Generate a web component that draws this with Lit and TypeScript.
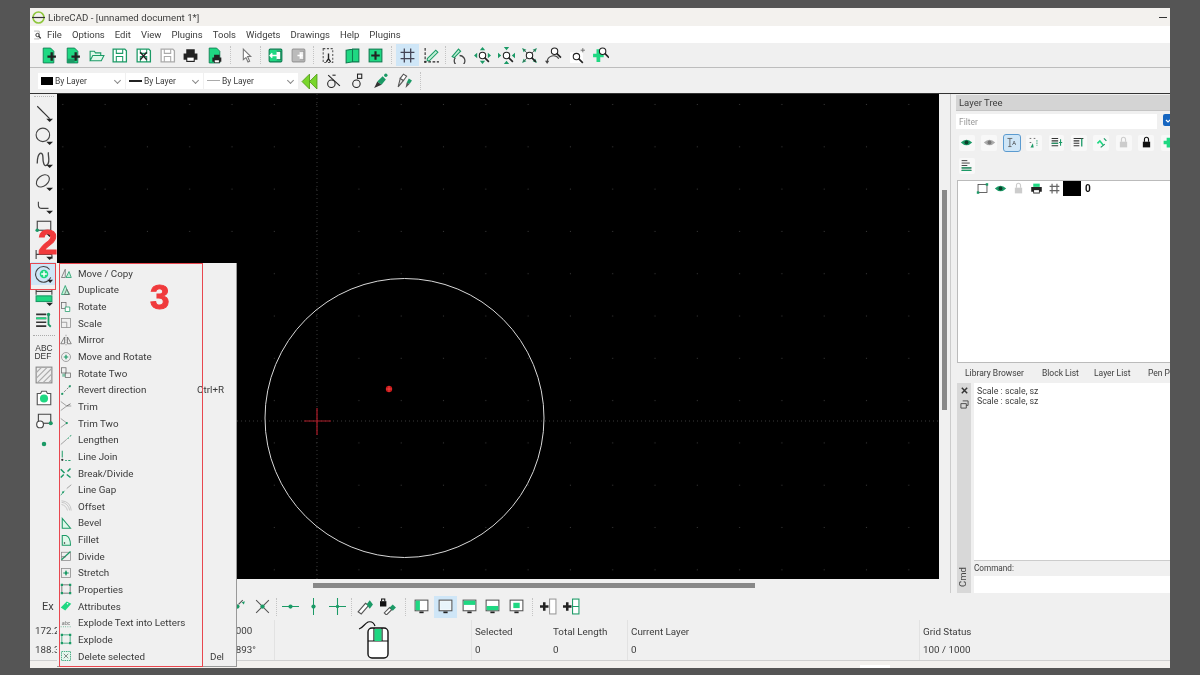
import { LitElement, html, css, svg } from 'lit';
import { customElement } from 'lit/decorators.js';

const G = '#1fd882';
const D = '#1b9a66';
const K = '#222';
const S = '#777';

const lens = (x: number, y: number) => svg`<circle cx=${x} cy=${y} r="3" fill="#fff" stroke=${K}/><path d="M${x + 2} ${y + 2}l4 4" stroke=${K} stroke-width="1.5"/>`;
const arrows = svg`<path d="M8 0l2.5 3h-5zM8 16l-2.5-3h5zM0 8l3-2.5v5zM16 8l-3-2.5v5z" fill=${D}/>`;
const floppy = (c: string) => svg`<path d="M2 2h11l1.5 1.5V14H2z" fill="#fff" stroke=${c} stroke-width="1.2"/><path d="M5 2v4h6V2M5 14V9h6v5" fill="none" stroke=${c}/>`;
const printer = (c: string) => svg`<path d="M4 2h8v4H4zM1.5 6h13v6H12v2H4v-2H1.5z" fill=${c}/><rect x="5" y="10" width="6" height="3" fill="#fff"/>`;
const page = (c: string) => svg`<path d="M3 1h7l3 3v11H3z" fill=${c} stroke="#0f7a50" stroke-width=".8"/>`;
const plus = svg`<path d="M7 9h8M11 5v8" stroke=${K} stroke-width="2.2"/>`;
const screen = (body: unknown) => svg`<rect x="2" y="2" width="12" height="10" fill="#fff" stroke="#555"/>${body}<path d="M6 13.5h4" stroke=${K} stroke-width="1.6"/>`;

const icons: Record<string, unknown> = {
  newdoc: svg`${page(G)}${plus}`,
  newtmpl: svg`${page(G)}<rect x="3" y="11" width="7" height="4" fill=${D}/>${plus}`,
  open: svg`<path d="M2 13V4h4l1 1.5h5V8M2 13l2.5-5H15l-2.5 5z" fill="#dff8ea" stroke=${D}/>`,
  save: floppy(D),
  saveas: svg`${floppy(D)}<path d="M5 5l6 7M11 5l-6 7" stroke=${K} stroke-width="1.3"/>`,
  savegrey: floppy('#aaa'),
  print: printer(K),
  printgreen: svg`<path d="M4 2h8v4H4z" fill=${G}/><path d="M1.500 6h13v6H12v2H4v-2H1.500z" fill=${K}/><rect x="5" y="10" width="6" height="3" fill="#fff"/>`,
  preview: svg`${page(G)}${svg`<g transform="translate(5 6) scale(.65)">${printer(K)}</g>`}`,
  pointer: svg`<path d="M5 2l7 7H9l2 4.5-1.6.7L7.500 10 5 12z" fill="#fff" stroke=${S}/>`,
  blockin: svg`<rect x="2" y="2" width="12" height="12" rx="1" fill=${G} stroke="#0f7a50"/><path d="M9 4h4v8H9" fill="#fff" stroke="#0f7a50"/><path d="M3 8h7M5 6L3 8l2 2" fill="none" stroke="#fff" stroke-width="1.4"/>`,
  blockgrey: svg`<rect x="2" y="2" width="12" height="12" rx="1" fill="#bbb" stroke="#999"/><path d="M9 4h4v8H9" fill="#eee" stroke="#999"/><path d="M7 8h5M10 6v4" stroke="#fff" stroke-width="1.4"/>`,
  cut: svg`<rect x="3" y="1.500" width="9" height="13" fill="none" stroke="#555" stroke-dasharray="2 1.500"/><path d="M8 6v5M6 14l2-3 2 3" stroke=${K} fill="none" stroke-width="1.300"/>`,
  book: svg`<path d="M2 3l6-1v12l-6 1zM8 2h6v12H8z" fill=${G} stroke="#0f7a50"/>`,
  bookplus: svg`<rect x="2" y="2" width="12" height="12" fill=${G} stroke="#0f7a50"/><path d="M4 8h8M8 4v8" stroke=${K} stroke-width="2"/>`,
  grid: svg`<path d="M5 1.500v13M11 1.500v13M1.500 5h13M1.500 11h13" stroke="#445" stroke-width="1.200"/>`,
  draft: svg`<path d="M2 1v14M1 14h14" stroke=${K} stroke-dasharray="2.500 1.500"/><path d="M4 11l8-8 2 2-8 8H4z" fill="#bff0d6" stroke=${D}/>`,
  redraw: svg`<path d="M2 9l6-7 2 2-6 6z" fill="#bff0d6" stroke=${D}/><path d="M5 10a5 5 0 1 0 4-2" fill="none" stroke="#444" stroke-width="1.200"/>`,
  zoomin: svg`${arrows}${lens(8, 8)}`,
  zoomout: svg`<path d="M8 3l2.500-3h-5zM8 13l-2.500 3h5zM3 8L0 5.500v5zM13 8l3-2.500v5z" fill=${D}/>${lens(8, 8)}`,
  zoomauto: svg`<path d="M1 1l4 1.500L2.500 5zM15 1l-4 1.500L13.500 5zM1 15l4-1.500L2.500 11zM15 15l-4-1.500 2.500-2.500z" fill=${D}/><path d="M2 2l12 12M14 2L2 14" stroke="#555" stroke-width=".8"/>${lens(8, 8)}`,
  zoomprev: svg`<path d="M2 14a6 6 0 0 1 11-3" fill="none" stroke="#444"/><path d="M0 13l4 0-2 3z" fill="#444"/>${lens(9, 4)}`,
  zoomwin: svg`<rect x="1" y="5" width="12" height="10" fill="#fff"/>${lens(7, 9)}<path d="M13 1v4M11 3h4" stroke="#666" stroke-width=".8"/>`,
  zoompan: svg`<path d="M6 2v12M1 8h10" stroke=${G} stroke-width="3.500"/>${lens(10, 4)}`,
  colorback: svg`<path d="M8 2L1 9l7 7zM15 2L8 9l7 7z" fill="#79d62c" stroke="#4f9c12" stroke-width=".8"/>`,
  modcirc: svg`<circle cx="6" cy="11" r="3.500" fill="none" stroke=${K}/><path d="M3 3l11 10" stroke=${K}/><path d="M7 3h3" stroke=${K}/>`,
  modsm: svg`<circle cx="7" cy="11" r="3.500" fill="none" stroke=${K}/><rect x="8" y="2" width="4" height="4" fill="none" stroke=${K}/>`,
  pencil: svg`<path d="M2 15l3-6 4 3z" fill="#333"/><path d="M5 9l5-5 3 3-4 5z" fill=${D}/><circle cx="13" cy="3" r="1.600" fill=${D}/>`,
  pencils: svg`<path d="M2 14l2-8 3 2z" fill="#ddd" stroke="#555"/><path d="M4 6l3-4 3 2-3 4z" fill="#fff" stroke="#555"/><path d="M9 15l1-5 3 1z" fill="#555"/><path d="M10 10l2-4 3 2-2 3z" fill=${D}/>`,
  line: svg`<path d="M2 2l11 11" stroke="#333"/><path d="M10 13h6l-3 3z" fill=${K}/>`,
  circle: svg`<circle cx="7" cy="7" r="6" fill="none" stroke="#444"/><path d="M10 13h6l-3 3z" fill=${K}/>`,
  spline: svg`<path d="M2 12C2 1 7 1 7 6s1 10 4 7 0-9 1-11" fill="none" stroke="#444" stroke-width="1.200"/><path d="M10 13h6l-3 3z" fill=${K}/>`,
  ellipse: svg`<ellipse cx="7" cy="7" rx="6.500" ry="4.500" transform="rotate(-40 7 7)" fill="none" stroke="#444"/><path d="M10 13h6l-3 3z" fill=${K}/>`,
  polyline: svg`<path d="M3 5v3q0 3 3 3h6" fill="none" stroke="#444"/><path d="M10 13h6l-3 3z" fill=${K}/>`,
  rect: svg`<rect x="2" y="2" width="12" height="8" fill="none" stroke="#444"/><circle cx="2" cy="10" r="1.600" fill=${D}/><path d="M10 13h6l-3 3z" fill=${K}/>`,
  dim: svg`<path d="M1 7v8M15 7v8M1 11h14" stroke="#444"/><path d="M10 13h6l-3 3z" fill=${K}/>`,
  modify: svg`<path d="M13 4a7 7 0 1 0 1 7" fill="none" stroke="#444"/><circle cx="8" cy="8" r="3.800" fill=${G}/><path d="M5.500 8h5M8 5.500v5" stroke="#fff" stroke-width="1.300"/><path d="M11 13h5l-2.500 3z" fill=${K}/>`,
  measure: svg`<path d="M1 1v5M15 1v5M1 3h14" stroke="#444"/><rect x="1" y="7" width="14" height="5" fill=${G} stroke=${D}/><path d="M10 13h6l-3 3z" fill=${K}/>`,
  select: svg`<path d="M1 3h9M1 6.500h9M1 10h9M1 13.500h9" stroke="#333" stroke-width="1.500"/><path d="M1 6.500h9" stroke=${G} stroke-width="1.500"/><path d="M12 3v9l2 2" fill="none" stroke=${D} stroke-width="1.600"/><circle cx="12" cy="3" r="1.500" fill=${D}/>`,
  text: svg`<text x="8" y="7.500" text-anchor="middle" font-size="7.500" font-family="Liberation Sans" fill="#333">ABC</text><text x="7" y="14.500" text-anchor="middle" font-size="7.500" font-family="Liberation Sans" fill="#333">DEF</text>`,
  hatch: svg`<rect x="1" y="1" width="14" height="14" fill="#eee" stroke="#888"/><path d="M1 6l5-5M1 11L11 1M2 15L15 2M7 15l8-8M12 15l3-3" stroke="#aaa"/>`,
  camera: svg`<path d="M2 4h3l1-2h4l1 2h3v10H2z" fill="#fff" stroke="#555"/><circle cx="8" cy="8.500" r="3.600" fill=${G}/>`,
  insert: svg`<path d="M3 9V2h11v7" fill="none" stroke="#444"/><circle cx="4.500" cy="11" r="3" fill="#fff" stroke="#444"/><path d="M7 10h6" stroke="#444"/><circle cx="14" cy="10" r="1.800" fill=${D}/>`,
  dot: svg`<circle cx="8" cy="8" r="2" fill=${D}/>`,
  eye: svg`<path d="M1 8q7-7 14 0-7 7-14 0z" fill=${D}/><circle cx="8" cy="8" r="2.400" fill="#0b3f2a"/>`,
  eyegrey: svg`<path d="M1 8q7-7 14 0-7 7-14 0z" fill="#aaa"/><circle cx="8" cy="8" r="2.400" fill="#777"/>`,
  ta: svg`<path d="M3 3h6M6 3v10M4 13h4" stroke="#555" fill="none"/><text x="9" y="11" font-size="7" font-family="Liberation Sans" fill="#333">A</text>`,
  layers: svg`<path d="M2 3h2M7 3h2M2 8h2" stroke="#555"/><path d="M3 14l3-5 1 5z" fill=${D}/><path d="M11 5v7" stroke=${D} stroke-dasharray="2 1"/>`,
  rowsa: svg`<path d="M2 3h8M2 6h8M2 9h8M2 12h8" stroke="#333" stroke-width="1.300"/><path d="M2 9h8" stroke=${D} stroke-width="1.300"/><path d="M13 4v8M11 8h4" stroke=${D} stroke-width="1.300"/>`,
  rowsb: svg`<path d="M2 3h12M2 6h7M2 9h7M2 12h7" stroke="#333" stroke-width="1.300"/><path d="M12 3v10" stroke=${D} stroke-width="1.600"/>`,
  diag: svg`<path d="M3 9l3-3 4 5" fill="none" stroke=${G} stroke-width="2"/><path d="M11 3l3 3M7 14l5-4" stroke=${D} stroke-width="1.500"/>`,
  lockgrey: svg`<rect x="3.500" y="7" width="9" height="7" fill="#ccc"/><path d="M5.500 7V4a2.500 2.500 0 0 1 5 0v3" fill="none" stroke="#ccc" stroke-width="1.400"/>`,
  lock: svg`<rect x="3.500" y="7" width="9" height="7" fill="#111"/><path d="M5.500 7V4a2.500 2.500 0 0 1 5 0v3" fill="none" stroke="#111" stroke-width="1.400"/>`,
  greenplus: svg`<path d="M8 2v12M2 8h12" stroke=${G} stroke-width="4.500"/>`,
  stack: svg`<path d="M2 2h7M2 5h10M2 8h7M2 11h12M2 14h12" stroke="#444" stroke-width="1.200"/><path d="M2 11h12M2 14h12" stroke=${D} stroke-width="1.600"/>`,
  square: svg`<rect x="2.500" y="3" width="11" height="10" fill="none" stroke="#444"/><rect x="1" y="11.500" width="3" height="3" fill=${D}/><rect x="12" y="1.500" width="3" height="3" fill=${D}/>`,
  hash: svg`<path d="M5 2v12M11 2v12M2 5.500h12M2 10.500h12" stroke="#666" stroke-width="1.500"/>`,
  snapa: svg`<path d="M3 3l4 4M12 2L8 6M3 13l4-5" stroke="#555"/><circle cx="7" cy="8" r="2" fill=${D}/><path d="M14 3l-3 1 2 2z" fill=${D}/>`,
  snapx: svg`<path d="M2 2l12 12M14 2L2 14" stroke="#555"/><circle cx="8" cy="8" r="2" fill=${D}/>`,
  reli: svg`<path d="M0 8h16" stroke=${D}/><circle cx="8" cy="8" r="2" fill=${D}/>`,
  relv: svg`<path d="M8 0v16" stroke=${D}/><circle cx="8" cy="8" r="2" fill=${D}/>`,
  relx: svg`<path d="M8 0v16M0 8h16" stroke=${D}/><circle cx="8" cy="8" r="1.600" fill=${D}/>`,
  rel0: svg`<path d="M1 13l3 2 7-8-3-2z" fill="#fff" stroke="#555"/><path d="M12 2l3 4-3 4-3-4z" fill=${D}/>`,
  rellock: svg`<rect x="0" y="3" width="6" height="5" fill="#111"/><path d="M1.500 3V1h3v2" fill="none" stroke="#111"/><path d="M4 14l2 2 5-5-2-2z" fill="#fff" stroke="#555"/><path d="M12 6l3 3-3 3-3-3z" fill=${D}/>`,
  scrleft: screen(svg`<rect x="2.500" y="2.500" width="4" height="9" fill=${G}/>`),
  scrfull: screen(svg`<rect x="3" y="3" width="10" height="8" fill="#e8f4fb"/>`),
  scrtop: screen(svg`<rect x="2.500" y="2.500" width="11" height="4" fill=${G}/>`),
  scrbot: screen(svg`<rect x="2.500" y="7.500" width="11" height="4" fill=${G}/>`),
  scrmid: screen(svg`<rect x="5" y="4.500" width="6" height="5" fill=${G}/>`),
  addone: svg`<path d="M0 8h8M4 4v8" stroke=${K} stroke-width="2.400"/><rect x="9" y="1" width="6" height="14" fill="#fff" stroke="#999"/>`,
  addtwo: svg`<path d="M0 8h8M4 4v8" stroke=${K} stroke-width="2.400"/><rect x="9" y="1" width="6" height="14" fill="#fff" stroke=${D}/><path d="M9 8h6" stroke=${D}/>`,
  mMove: svg`<path d="M2 14l5-11v11z" fill="none" stroke="#666"/><path d="M8 14l4-8 3 8z" fill="#bff0d6" stroke=${D}/>`,
  mDup: svg`<path d="M2 14l5-12 5 12z" fill="#bff0d6" stroke=${D}/><path d="M6 14l3-7 4 7z" fill="none" stroke="#666"/>`,
  mRot: svg`<rect x="2" y="2" width="6" height="8" fill="none" stroke="#666"/><path d="M7 8h6v6H7z" fill="#fff" stroke=${D}/>`,
  mScale: svg`<rect x="2" y="2" width="12" height="12" fill="none" stroke="#888"/><path d="M2 7h7v7" fill="none" stroke="#888"/>`,
  mMirror: svg`<path d="M8 1v14" stroke="#888" stroke-dasharray="2 1"/><path d="M6 13H1l5-9zM10 13h5l-5-9z" fill="none" stroke="#666"/>`,
  mMoveRot: svg`<circle cx="8" cy="8" r="6" fill="none" stroke="#888"/><path d="M5 8h6M8 5v6" stroke=${D} stroke-width="1.600"/>`,
  mRot2: svg`<rect x="2" y="1" width="6" height="7" fill="none" stroke="#666"/><rect x="7" y="8" width="7" height="6" fill="none" stroke="#666"/><rect x="3" y="9" width="4" height="4" fill=${D} opacity=".5"/>`,
  mRevert: svg`<path d="M2 14L14 2" stroke="#555" stroke-dasharray="3 2"/><circle cx="3" cy="13" r="1.500" fill=${D}/><circle cx="13" cy="3" r="1.500" fill=${D}/>`,
  mTrim: svg`<path d="M1 2l8 6-8 6M9 8h6" fill="none" stroke="#888"/><path d="M9 8l5-3" stroke="#555"/>`,
  mTrim2: svg`<path d="M1 2l8 6-8 6" fill="none" stroke="#888"/><circle cx="9" cy="8" r="1.500" fill=${D}/>`,
  mLen: svg`<path d="M1 14l8-7" stroke="#888"/><path d="M10 6l2-1M13 3l2-1" stroke=${D} stroke-width="1.300"/>`,
  mJoin: svg`<path d="M3 1v9M7 14h2M11 14h3" stroke=${D} stroke-width="1.300"/><circle cx="3" cy="13" r="1.500" fill="#333"/>`,
  mBreak: svg`<path d="M1 3l5 5M9 10l5 4M14 2l-4 4M5 10l-4 4" stroke=${D} stroke-width="2"/>`,
  mGap: svg`<path d="M1 15l5-6" stroke=${D}/><path d="M9 6l6-5" stroke="#888"/><circle cx="4" cy="11" r="1.200" fill=${D}/>`,
  mOffset: svg`<path d="M2 3q9 1 11 11M2 6q6 1 8 8M2 1q12 1 13 13" fill="none" stroke="#bbb"/>`,
  mBevel: svg`<path d="M3 15V2l11 13z" fill="#dff8ea" stroke=${D} stroke-width="1.400"/>`,
  mFillet: svg`<path d="M3 15V2h5q6 2 6 13z" fill="#dff8ea" stroke=${D} stroke-width="1.400"/><circle cx="6" cy="12" r="1" fill=${K}/>`,
  mDivide: svg`<rect x="2" y="3" width="12" height="11" fill="none" stroke="#888"/><path d="M2 13L14 2" stroke=${D} stroke-width="1.600"/><path d="M2 9h6" stroke="#666"/>`,
  mStretch: svg`<rect x="2" y="2" width="12" height="12" fill="#eee" stroke="#888"/><path d="M8 4l2 4-2 4-2-4z" fill=${D}/><path d="M4 8h8" stroke=${D}/>`,
  mProps: svg`<rect x="2.500" y="2.500" width="11" height="11" fill="none" stroke="#555"/><path d="M1 1h3v3H1zM12 1h3v3h-3zM1 12h3v3H1zM12 12h3v3h-3z" fill=${D}/>`,
  mAttr: svg`<path d="M1 10l8-8 6 3-8 9z" fill=${G}/><circle cx="10" cy="5" r="1" fill="#fff"/>`,
  mExText: svg`<text x="8" y="11" text-anchor="middle" font-size="7" font-style="italic" font-family="Liberation Sans" fill="#666">abc</text><path d="M1 13h14" stroke=${D} stroke-dasharray="1 2"/>`,
  mExplode: svg`<rect x="2.500" y="2.500" width="11" height="11" fill="none" stroke=${D}/><path d="M1 1h3v3H1zM12 1h3v3h-3zM1 12h3v3H1zM12 12h3v3h-3z" fill=${D}/>`,
  mDelete: svg`<rect x="2" y="2" width="12" height="12" fill="#e6f7ee" stroke=${D} stroke-dasharray="2 1"/><path d="M5 5l6 6M11 5l-6 6" stroke="#666"/>`,
};

const ic = (name: string) => html`<svg class="ic" viewBox="0 0 16 16">${icons[name]}</svg>`;

// numbers in a toolbar list are separator widths, strings are buttons
const topBar: (string | number)[] = ['newdoc', 'newtmpl', 'open', 'save', 'saveas', 'savegrey', 'print', 'preview', 8, 'pointer', 5, 'blockin', 'blockgrey', 6, 'cut', 'book', 'bookplus', 8, '*grid', 'draft', 4, 'redraw', 'zoomin', 'zoomout', 'zoomauto', 'zoomprev', 'zoomwin', 'zoompan'];
const penBar = ['colorback', 'modcirc', 'modsm', 'pencil', 'pencils'];
const sideTop = ['line', 'circle', 'spline', 'ellipse', 'polyline', 'rect', 'dim', '*modify', 'measure', 'select'];
const sideBottom = ['text', 'hatch', 'camera', 'insert', 'dot'];
const snapBar: (string | number)[] = ['snapa', 'snapx', 4, 'reli', 'relv', 'relx', 4, 'rel0', 'rellock', 9, 'scrleft', '*scrfull', 'scrtop', 'scrbot', 'scrmid', 8, 'addone', 'addtwo'];
const layerBtns = ['eye', 'eyegrey', '*ta', 'layers', 'rowsa', 'rowsb', 'diag', 'lockgrey', 'lock', 'greenplus', 'stack'];

const menu: [string, string, string?][] = [
  ['mMove', 'Move / Copy'], ['mDup', 'Duplicate'], ['mRot', 'Rotate'], ['mScale', 'Scale'], ['mMirror', 'Mirror'],
  ['mMoveRot', 'Move and Rotate'], ['mRot2', 'Rotate Two'], ['mRevert', 'Revert direction', 'Ctrl+R'], ['mTrim', 'Trim'],
  ['mTrim2', 'Trim Two'], ['mLen', 'Lengthen'], ['mJoin', 'Line Join'], ['mBreak', 'Break/Divide'], ['mGap', 'Line Gap'],
  ['mOffset', 'Offset'], ['mBevel', 'Bevel'], ['mFillet', 'Fillet'], ['mDivide', 'Divide'], ['mStretch', 'Stretch'],
  ['mProps', 'Properties'], ['mAttr', 'Attributes'], ['mExText', 'Explode Text into Letters'], ['mExplode', 'Explode'],
  ['mDelete', 'Delete selected', 'Del'],
];

const menuBar = ['File', 'Options', 'Edit', 'View', 'Plugins', 'Tools', 'Widgets', 'Drawings', 'Help', 'Plugins'];

@customElement('app-root')
export class AppRoot extends LitElement {
  static styles = css`
    :host {
      display: block;
      width: 1200px;
      height: 675px;
      background: #555;
      padding: 8px 30px 7px;
      box-sizing: border-box;
      font-family: Roboto, "Liberation Sans", sans-serif;
      font-size: 9.5px;
      color: #3c3c3c;
    }
    .win { position: relative; width: 1140px; height: 660px; background: #f0f0f0; overflow: hidden; display: flex; flex-direction: column; filter: blur(0.25px); }
    .ic { width: 17px; height: 17px; display: block; flex: none; }
    .title { height: 18px; flex: none; background: #f3f1ee; display: flex; align-items: center; padding-left: 2px; font-size: 9.700px; gap: 3px; }
    .logo { width: 13px; height: 15px; flex: none; }
    .min { margin-left: auto; width: 8px; height: 1px; background: #333; margin-right: 3px; }
    .menubar { height: 17px; flex: none; background: #fff; display: flex; align-items: center; padding-left: 3px; gap: 10px; font-size: 9.500px; }
    .menubar .ic { width: 9px; height: 10px; margin-right: -5px; }
    .bar { height: 24px; flex: none; display: flex; align-items: center; padding-left: 7px; border-bottom: 1px solid #bdbdbd; }
    .btn { width: 23.7px; height: 22px; flex: none; display: flex; align-items: center; justify-content: center; }
    .btn.on { background: #cfe6f7; }
    .sep { flex: none; height: 20px; position: relative; }
    .sep::after { content: ""; position: absolute; left: 45%; top: 1px; bottom: 1px; border-left: 1px dotted #c4c4c4; }
    .pens { height: 25px; flex: none; display: flex; align-items: center; padding-left: 8px; border-bottom: 1px solid #333; }
    .combo { height: 16px; background: #fff; display: flex; align-items: center; flex: none; margin-right: 1px; padding-left: 3px; box-sizing: border-box; font-size: 8.500px; gap: 2px; position: relative; }
    .combo::after { content: ""; position: absolute; right: 5px; top: 5px; width: 4px; height: 4px; border: solid #888; border-width: 0 1px 1px 0; transform: rotate(45deg); }
    .c1 { width: 87px; }
    .c2 { width: 77px; }
    .c3 { width: 94px; margin-right: 0; }
    .swatch { width: 12px; height: 8px; background: #000; }
    .ln { width: 13px; height: 2px; background: #222; }
    .ln.thin { height: 1px; background: #aaa; }
    .pengroup { display: flex; }
    .main { height: 499px; flex: none; display: flex; }
    .side { width: 27px; flex: none; display: flex; flex-direction: column; align-items: center; }
    .grip { width: 20px; height: 5px; flex: none; border-top: 1px dotted #bbb; margin-top: 2px; box-sizing: border-box; }
    .side .btn { height: 23px; width: 25px; }
    .side .ic { width: 18px; height: 18px; }
    .side .gap { width: 22px; flex: none; height: 4px; border-bottom: 1px dotted #aaa; margin-bottom: 4px; }
    .center { width: 893px; flex: none; display: flex; flex-direction: column; border-right: 1px solid #ccc; }
    .center-top { height: 485px; flex: none; display: flex; }
    .canvas { width: 882px; height: 485px; flex: none; background: #000; display: block; }
    .vscroll { width: 11px; flex: none; padding-top: 96px; box-sizing: border-box; display: flex; justify-content: center; }
    .vthumb { width: 5px; height: 220px; background: #888; }
    .hscroll { height: 14px; flex: none; padding: 4px 0 0 256px; box-sizing: border-box; }
    .hthumb { width: 442px; height: 5px; background: #888; }
    .dock { flex: 1; min-width: 0; padding-left: 5px; display: flex; flex-direction: column; }
    .dock-head { height: 15px; flex: none; background: #d4d4d4; margin-top: 1px; padding-left: 3px; display: flex; align-items: center; font-size: 9.500px; border-bottom: 1px solid #c4c4c4; }
    .filter { display: flex; flex: none; margin-top: 3px; gap: 6px; height: 15px; }
    .filter-in { width: 201px; flex: none; background: #fff; color: #999; padding-left: 3px; font-size: 8.500px; display: flex; align-items: center; box-sizing: border-box; }
    .check { width: 12px; height: 12px; border-radius: 2px; background: #1565c0; flex: none; }
    .check svg { display: block; }
    .layer-btns { display: flex; flex-wrap: wrap; width: 230px; gap: 7px 6.6px; margin: 6px 0 0 3px; flex: none; }
    .lb { width: 15.800px; height: 15.800px; background: #f8f8f8; border-radius: 2px; display: flex; align-items: center; justify-content: center; }
    .lb .ic { width: 13px; height: 13px; }
    .lb.on { background: #cfe6f7; outline: 1px solid #5b9bd0; }
    .tree { height: 183px; flex: none; margin: 6px 0 0 1px; background: #fff; border: 1px solid #bbb; border-right: 0; box-sizing: border-box; display: flex; align-items: flex-start; padding: 0 0 0 15px; }
    .row { display: flex; align-items: center; height: 15px; }
    .cell { width: 18px; height: 15px; display: flex; align-items: center; justify-content: center; }
    .cell .ic { width: 13px; height: 13px; }
    .blk { width: 18px; height: 15px; background: #000; }
    .zero { font-weight: 700; color: #111; margin-left: 4px; font-size: 10px; }
    .tabs { height: 20px; flex: none; display: flex; align-items: center; font-size: 8.500px; padding-left: 9px; }
    .tab { flex: none; }
    .t1 { width: 77px; }
    .t2 { width: 52px; }
    .t3 { width: 54px; }
    .cmd { flex: 1; display: flex; min-height: 0; }
    .cmd-side { width: 14px; flex: none; margin-left: 1px; background: #d8d8d8; display: flex; flex-direction: column; align-items: center; padding-top: 3px; gap: 5px; position: relative; }
    .cmd-side .ic { width: 9px; height: 9px; }
    .cmd-tab { position: absolute; bottom: 0; left: 0; right: 0; height: 31px; writing-mode: vertical-rl; transform: rotate(180deg); text-align: center; font-size: 9.500px; color: #444; }
    .cmd-main { flex: 1; margin-left: 3px; display: flex; flex-direction: column; min-width: 0; }
    .log { height: 178px; flex: none; background: #fff; padding: 3px; box-sizing: border-box; font-size: 8.800px; line-height: 10px; border-bottom: 1px solid #ccc; }
    .cmd-label { height: 15px; flex: none; font-size: 8.200px; display: flex; align-items: center; }
    .cmd-in { flex: 1; background: #fff; }
    .snapbar { height: 27px; flex: none; display: flex; align-items: center; font-size: 11px; }
    .ex { width: 197px; flex: none; padding-left: 12px; box-sizing: border-box; }
    .status { height: 40px; flex: none; display: flex; border-bottom: 1px solid #d0d0d0; font-size: 9.800px; }
    .st { flex: none; display: flex; flex-direction: column; justify-content: space-between; padding: 6px 3px 5px; box-sizing: border-box; border-right: 1px solid #e2e2e2; }
    .st.coords { width: 245px; flex-direction: row; padding: 5px 18px 5px 5px; }
    .pair { display: flex; flex-direction: column; justify-content: space-between; }
    .st.mouse { width: 197px; align-items: center; justify-content: center; padding: 0 0 0 8px; }
    .mouse-ic { width: 44px; height: 38px; display: block; }
    .st.sel { width: 78px; border: 0; }
    .st.len { width: 78px; }
    .st.layer { width: 292px; }
    .st.gridst { width: 56px; border: 0; }
    .strip { flex: 1; background: #f3f1ee; position: relative; }
    .strip-tab { position: absolute; right: 280px; top: 4px; width: 30px; height: 4px; background: #fff; }
    .popup { position: absolute; left: 27px; top: 255px; width: 180px; height: 404px; background: #f0f0f0; border-right: 1px solid #999; border-bottom: 1px solid #999; box-sizing: border-box; }
    .item { height: 16.650px; display: flex; align-items: center; position: relative; top: 2px; font-size: 9.800px; color: #3a3a3a; }
    .item .ic { width: 12px; height: 12px; margin: 0 6px 0 3px; }
    .shortcut { margin-left: auto; margin-right: 12px; }
    .mark { position: absolute; border: 1px solid #e8474f; box-sizing: border-box; }
    .mark.two { left: 0; top: 255px; width: 26px; height: 27px; }
    .mark.three { left: 29px; top: 255px; width: 144px; height: 404px; }
    .num { position: absolute; font-family: "Liberation Sans", sans-serif; font-weight: 700; font-size: 35px; line-height: 35px; color: #f03a3c; -webkit-text-stroke: 1px #f03a3c; }
    .num.n2 { left: 8px; top: 216px; }
    .num.n3 { left: 120px; top: 271px; }
  `;

  private toolbar(items: (string | number)[]) {
    return items.map((it) => {
      if (typeof it === 'number') return html`<div class="sep" style="width:${it}px"></div>`;
      const on = it.startsWith('*');
      return html`<div class="btn ${on ? 'on' : ''}">${ic(on ? it.slice(1) : it)}</div>`;
    });
  }

  private canvas() {
    return html`<svg class="canvas" viewBox="0 0 882 485">
      <defs>
        <pattern id="dots" x="-15.300" y="-11.600" width="42.300" height="42.300" patternUnits="userSpaceOnUse">
          <rect x="20.600" y="21.600" width="1" height="1" fill="#3c3c3c"/>
        </pattern>
      </defs>
      <rect width="882" height="485" fill="url(#dots)"/>
      <path d="M260 0V485M0 327H882" stroke="#3a3a3a" stroke-dasharray="1 3" fill="none"/>
      <circle cx="347.500" cy="324" r="139.500" fill="none" stroke="#d8d8d8" stroke-width="1"/>
      <path d="M247 327h27M260 314v27" stroke="#b01c28" stroke-width="1.200"/>
      <circle cx="332" cy="295" r="3.200" fill="#c41818"/>
      <path d="M329 295h6M332 292v6" stroke="#ff5050" stroke-width=".7"/>
    </svg>`;
  }

  private dock() {
    return html`<div class="dock">
      <div class="dock-head">Layer Tree</div>
      <div class="filter">
        <div class="filter-in">Filter</div>
        <div class="check"><svg width="12" height="12" viewBox="0 0 12 12"><path d="M3 6l2 2 4-4" fill="none" stroke="#fff" stroke-width="1.200"/></svg></div>
      </div>
      <div class="layer-btns">
        ${layerBtns.map((b) => {
          const on = b.startsWith('*');
          return html`<div class="lb ${on ? 'on' : ''}">${ic(on ? b.slice(1) : b)}</div>`;
        })}
      </div>
      <div class="tree">
        <div class="row">
          <div class="cell">${ic('square')}</div>
          <div class="cell">${ic('eye')}</div>
          <div class="cell">${ic('lockgrey')}</div>
          <div class="cell">${ic('printgreen')}</div>
          <div class="cell">${ic('hash')}</div>
          <div class="blk"></div>
          <span class="zero">0</span>
        </div>
      </div>
      <div class="tabs">
        <span class="tab t1">Library Browser</span><span class="tab t2">Block List</span><span class="tab t3">Layer List</span><span class="tab">Pen Palette</span>
      </div>
      <div class="cmd">
        <div class="cmd-side">
          <svg class="ic" viewBox="0 0 10 10"><path d="M2 2l6 6M8 2L2 8" stroke="#333" stroke-width="1.600"/></svg>
          <svg class="ic" viewBox="0 0 10 10"><path d="M3 1h6v5H7M1 4h6v5H1z" fill="none" stroke="#444"/></svg>
          <div class="cmd-tab">Cmd</div>
        </div>
        <div class="cmd-main">
          <div class="log">Scale : scale, sz<br />Scale : scale, sz</div>
          <div class="cmd-label">Command:</div>
          <div class="cmd-in"></div>
        </div>
      </div>
    </div>`;
  }

  private status() {
    return html`<div class="status">
      <div class="st coords">
        <div class="pair"><span>172.2</span><span>188.3</span></div>
        <div class="pair"><span>000</span><span>893°</span></div>
      </div>
      <div class="st mouse">
        <svg class="mouse-ic" viewBox="0 0 44 38">
          <path d="M4 8c4-1 5-5 9-7 4-1 6 1 7 4" fill="none" stroke="#111" stroke-width="1.200"/>
          <rect x="13" y="7" width="20" height="30" rx="4" fill="#fff" stroke="#111" stroke-width="1.400"/>
          <path d="M13 20h20M19 7v13M27 7v13" stroke="#111" stroke-width="1.200"/>
          <rect x="19.500" y="8" width="7" height="12" fill=${G}/>
        </svg>
      </div>
      <div class="st sel"><span>Selected</span><span>0</span></div>
      <div class="st len"><span>Total Length</span><span>0</span></div>
      <div class="st layer"><span>Current Layer</span><span>0</span></div>
      <div class="st gridst"><span>Grid Status</span><span>100 / 1000</span></div>
    </div>`;
  }

  render() {
    return html`<div class="win">
      <div class="title">
        <svg class="logo" viewBox="0 0 13 15"><circle cx="6.500" cy="7.500" r="5.500" fill="none" stroke="#8fc73e" stroke-width="1.600"/><path d="M0 7.500h13" stroke="#333" stroke-width="1.200"/></svg>
        <span>LibreCAD - [unnamed document 1*]</span>
        <div class="min"></div>
      </div>
      <div class="menubar">
        <svg class="ic" viewBox="0 0 16 16"><path d="M2 1h9v14H2" fill="#fff" stroke="#888"/><circle cx="8" cy="8" r="3" fill="none" stroke="#222" stroke-width="1.500"/><path d="M10 10l4 4" stroke="#222" stroke-width="2"/></svg>
        ${menuBar.map((m) => html`<span>${m}</span>`)}
      </div>
      <div class="bar">${this.toolbar(topBar)}</div>
      <div class="pens">
        <div class="combo c1"><div class="swatch"></div>By Layer</div>
        <div class="combo c2"><div class="ln"></div>By Layer</div>
        <div class="combo c3"><div class="ln thin"></div>By Layer</div>
        <div class="pengroup">${penBar.map((p) => html`<div class="btn">${ic(p)}</div>`)}</div>
        <div class="sep" style="width:8px"></div>
      </div>
      <div class="main">
        <div class="side">
          <div class="grip"></div>
          <div>${sideTop.map((s) => {
            const on = s.startsWith('*');
            return html`<div class="btn ${on ? 'on' : ''}">${ic(on ? s.slice(1) : s)}</div>`;
          })}</div>
          <div class="gap"></div>
          <div>${sideBottom.map((s) => html`<div class="btn">${ic(s)}</div>`)}</div>
        </div>
        <div class="center">
          <div class="center-top">
            ${this.canvas()}
            <div class="vscroll"><div class="vthumb"></div></div>
          </div>
          <div class="hscroll"><div class="hthumb"></div></div>
        </div>
        ${this.dock()}
      </div>
      <div class="snapbar"><div class="ex">Ex</div>${this.toolbar(snapBar)}</div>
      ${this.status()}
      <div class="strip"><div class="strip-tab"></div></div>

      <div class="popup">
        ${menu.map(([i, t, k]) => html`<div class="item">
          ${ic(i)}<span>${t}</span>${k ? html`<span class="shortcut">${k}</span>` : ''}
        </div>`)}
      </div>
      <div class="mark two"></div>
      <div class="mark three"></div>
      <div class="num n2">2</div>
      <div class="num n3">3</div>
    </div>`;
  }
}
